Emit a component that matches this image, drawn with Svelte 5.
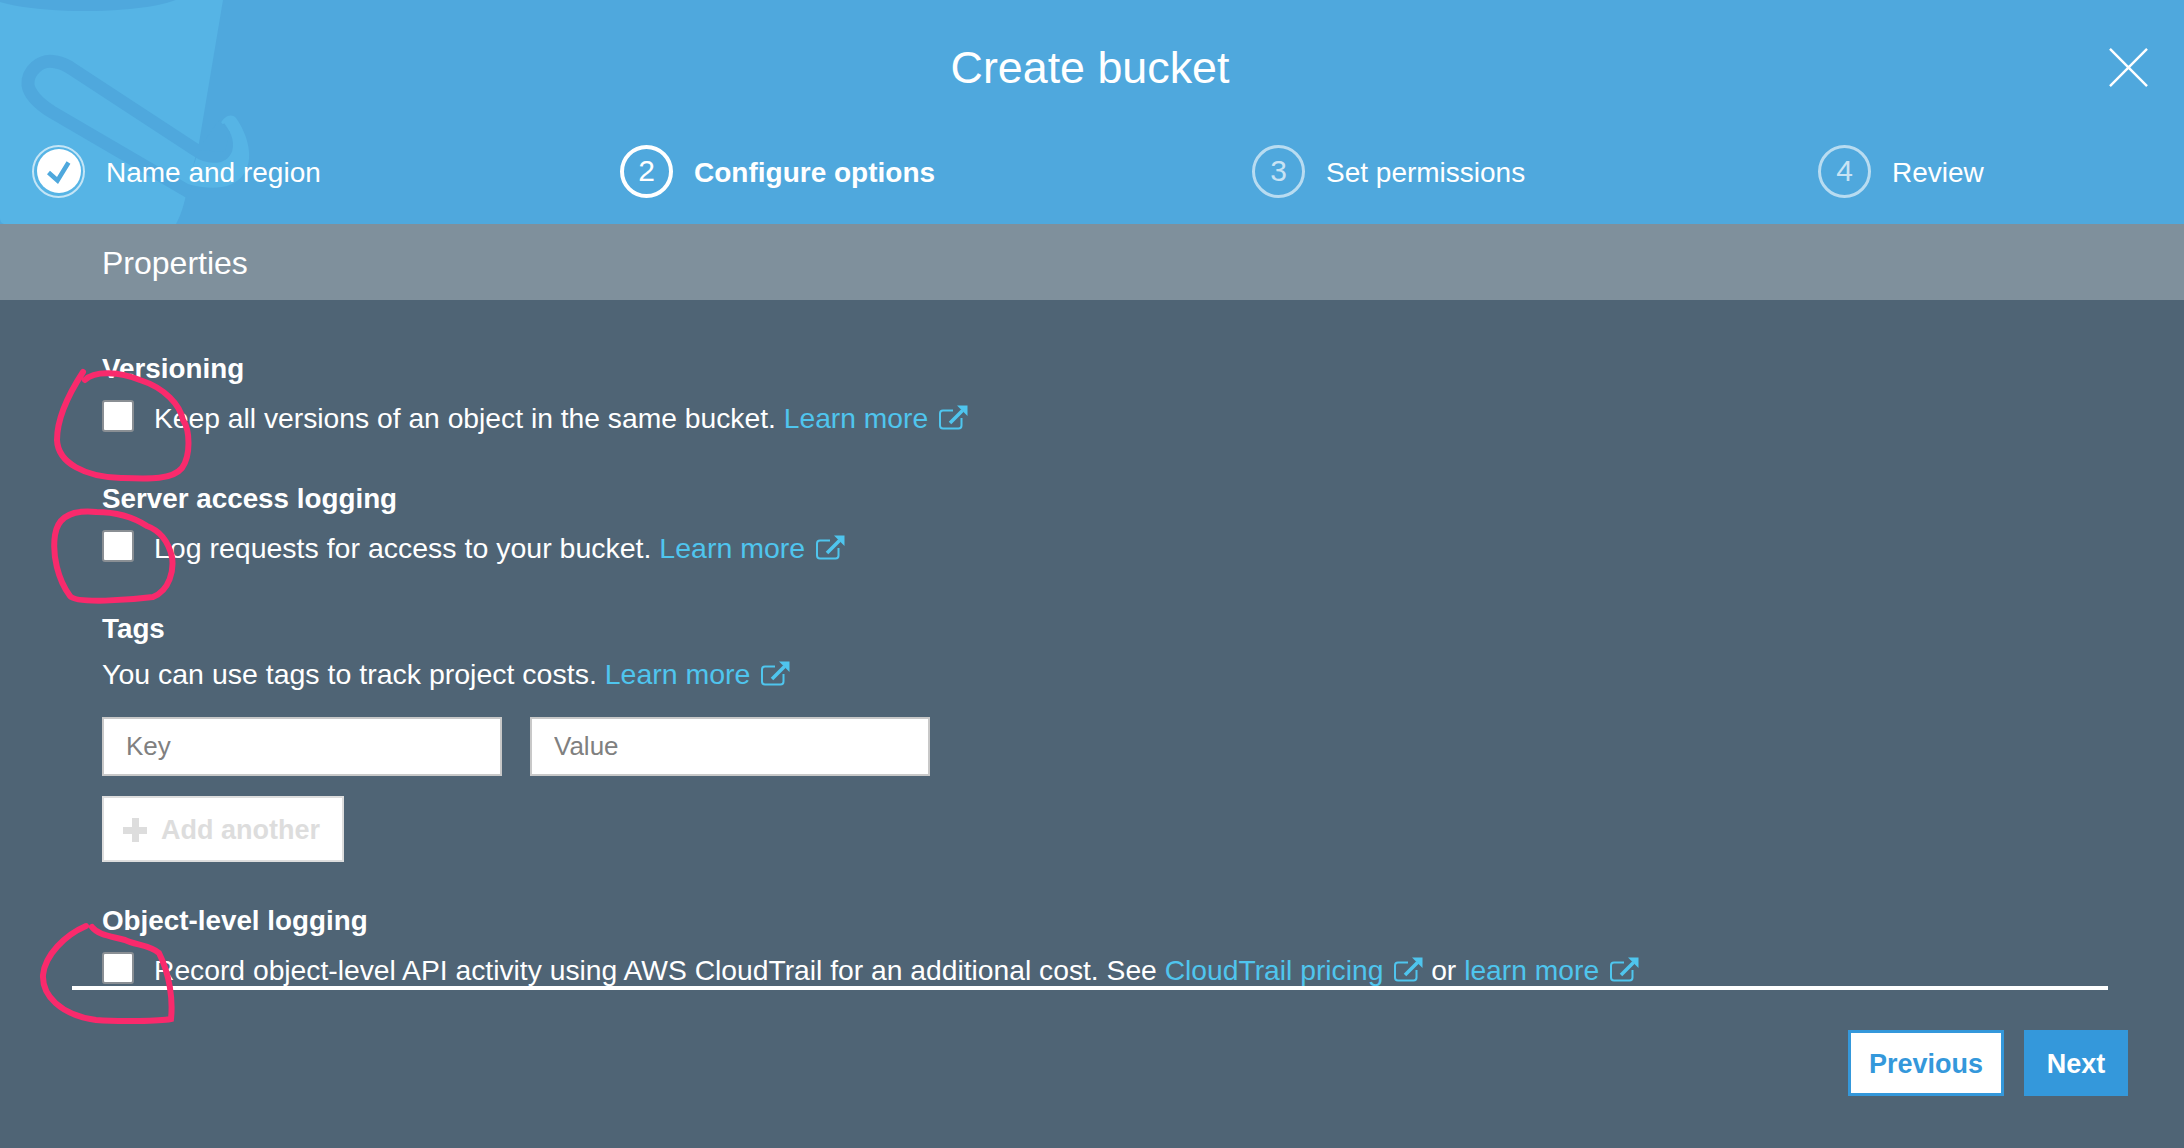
<script>
  const steps = [
    { n: 1, label: 'Name and region', done: true },
    { n: 2, label: 'Configure options', active: true },
    { n: 3, label: 'Set permissions' },
    { n: 4, label: 'Review' }
  ];
</script>

{#snippet ext()}
  <svg class="ext" viewBox="0 0 29 25" aria-hidden="true">
    <path d="M22.500 13v7.500a3 3 0 0 1-3 3H4a3 3 0 0 1-3-3V8.500a3 3 0 0 1 3-3h10" fill="none" stroke="currentColor" stroke-width="2" />
    <path d="M11 18 L23.500 5.500" fill="none" stroke="currentColor" stroke-width="3.500" />
    <path d="M18 .5H28.500V11Z" fill="currentColor" />
  </svg>
{/snippet}

<div class="page">
  <header class="head">
    <svg class="bucket" viewBox="0 0 260 224" aria-hidden="true">
      <path d="M0 0H223L199 143L187 190C184 205 181 215 176 224H6C2 224 0 222 0 218Z" fill="#56b4e5" />
      <path d="M219 127C222 118 230 112 236 118C248 135 255 160 243 175C232 190 210 190 187 184L199 150Z" fill="#56b4e5" />
      <ellipse cx="85" cy="-8" rx="100" ry="19" fill="#4fa8dd" />
      <path d="M189 192L52 112C36 102 29 92 28 85C27 72 40 58 56 62C62 63 68 66 72 69L196 150C207 158 222 159 226 149C228 141 224 134 219 127" fill="none" stroke="#4fa8dd" stroke-width="13" />
      <path d="M203 143L199 143L199 150L225 152L230 132L219 120Z" fill="#4fa8dd" />
    </svg>
    <h1>Create bucket</h1>
    <svg class="close" viewBox="0 0 40 40" aria-hidden="true">
      <path d="M1 1L39 39M39 1L1 39" stroke="#fff" stroke-width="2.500" />
    </svg>
    <ol class="steps">
      {#each steps as s}
        <li class="step" class:active={s.active}>
          {#if s.done}
            <span class="num done">
              <svg viewBox="0 0 44 44" aria-hidden="true"><path d="M11.500 23.500l9 8 11-18" fill="none" stroke="#4fa8dd" stroke-width="4.500" /></svg>
            </span>
          {:else}
            <span class="num">{s.n}</span>
          {/if}
          <span class="label">{s.label}</span>
        </li>
      {/each}
    </ol>
  </header>

  <div class="band">Properties</div>

  <main class="body">
    <div class="fields">
      <section class="field">
        <h2>Versioning</h2>
        <label class="row">
          <input type="checkbox" />
          <span>Keep all versions of an object in the same bucket. <a href="#v">Learn more {@render ext()}</a></span>
        </label>
      </section>
      <section class="field">
        <h2>Server access logging</h2>
        <label class="row wide">
          <input type="checkbox" />
          <span>Log requests for access to your bucket. <a href="#l">Learn more {@render ext()}</a></span>
        </label>
      </section>
      <section class="field tags">
        <h2>Tags</h2>
        <p class="wide">You can use tags to track project costs. <a href="#t">Learn more {@render ext()}</a></p>
        <div class="inputs">
          <input type="text" placeholder="Key" />
          <input type="text" placeholder="Value" />
        </div>
        <button class="add" disabled><span class="plus"></span>Add another</button>
      </section>
      <section class="field last">
        <h2>Object-level logging</h2>
        <label class="row">
          <input type="checkbox" />
          <span>Record object-level API activity using AWS CloudTrail for an additional cost. See <a href="#c">CloudTrail pricing {@render ext()}</a> or <a href="#m">learn more {@render ext()}</a></span>
        </label>
      </section>
    </div>
    <div class="rule"></div>
    <footer class="foot">
      <button class="btn prev">Previous</button>
      <button class="btn next">Next</button>
    </footer>
  </main>

  <!-- hand drawn marks on top of the screenshot -->
  <svg class="marks" viewBox="0 0 2184 1148" aria-hidden="true">
    <path d="M83 372C68 395 57 420 57 440C58 463 85 477 121 478C150 479 172 480 182 468C191 455 190 430 183 420C180 405 165 388 140 380C120 372 95 370 85 380" />
    <path d="M96 512C75 510 58 515 55 535C52 555 58 580 70 596C76 604 130 600 153 597C170 590 174 570 172 557C168 540 158 530 147 526C130 515 112 512 96 512" />
    <path d="M86 926C65 935 45 955 43 975C42 995 60 1015 96 1020C120 1022 160 1021 171 1019C173 1000 170 975 159 953C150 945 135 945 125 940C110 936 98 935 92 927" />
  </svg>
</div>

<style>
  :global(body) { margin: 0; background: #4f6475; }
  .page {
    position: relative;
    width: 2184px; height: 1148px; overflow: hidden;
    background: #4f6475;
    color: #fff;
    font-family: "Liberation Sans", Arial, sans-serif;
    font-size: 28.25px;
  }
  .head { position: relative; height: 224px; background: #4fa8dd; }
  .bucket { position: absolute; left: 0; top: 0; width: 260px; height: 224px; }
  .close { position: absolute; left: 2109px; top: 48px; width: 39px; height: 39px; }
  h1 {
    position: relative; margin: 0; padding-top: 42px; padding-right: 4px;
    text-align: center; font-size: 44.800px; line-height: 50px; font-weight: 400;
  }
  .steps {
    position: relative; list-style: none; margin: 0; padding: 52px 0 0 32px;
    display: grid; grid-template-columns: 588px 632px 566px auto;
    font-size: 28px;
  }
  .step { display: flex; align-items: center; gap: 21px; height: 54px; }
  .step.active { font-weight: 700; }
  .label { padding-top: 4px; }
  .num {
    box-sizing: border-box; width: 53px; height: 53px; border-radius: 50%;
    border: 3px solid rgba(255, 255, 255, 0.6);
    color: rgba(255, 255, 255, 0.7);
    display: flex; align-items: center; justify-content: center;
    font-size: 30px; font-weight: 400;
  }
  .active .num { border-color: #fff; color: #fff; border-width: 4px; }
  .num.done {
    border-width: 2px; border-color: rgba(255, 255, 255, 0.65);
    padding: 2px;
  }
  .num.done svg { width: 44px; height: 44px; background: #fff; border-radius: 50%; }
  .band {
    box-sizing: border-box; height: 76px; padding-left: 102px;
    background: #7f909c; font-size: 32px; line-height: 78px;
  }
  .fields { padding: 48px 0 0 102px; }
  h2 { margin: 0 0 -2px; font-size: 27.800px; line-height: 42px; font-weight: 700; }
  .field { margin-bottom: 42px; }
  .field.last { margin-bottom: 0; margin-top: 38px; }
  .tags { margin-bottom: 0; }
  .row { display: flex; gap: 20px; margin-top: 12px; line-height: 36px; height: 36px; white-space: nowrap; }
  .wide { font-size: 28.500px; }
  .row input {
    appearance: none; margin: 0; box-sizing: border-box; flex: none;
    width: 32px; height: 32px; background: #fff;
    border: 2px solid #8a8f94; border-radius: 3px;
  }
  p { margin: 8px 0 -1px; line-height: 37px; }
  a { color: #4fc5ee; text-decoration: none; }
  .ext { width: 29px; height: 25px; margin-left: 3px; vertical-align: -2px; }
  .inputs { display: flex; gap: 28px; margin-top: 25px; }
  .inputs input {
    box-sizing: border-box; width: 400px; height: 59px; padding: 0 22px;
    background: #fff; border: 2px solid #c8c8c8; border-radius: 0;
    font: 26px "Liberation Sans", Arial, sans-serif; outline: none;
  }
  .inputs input::placeholder { color: #808080; opacity: 1; }
  .add {
    display: flex; align-items: center; gap: 14px;
    box-sizing: border-box; width: 242px; height: 66px; margin-top: 20px; padding: 2px 0 0 19px;
    background: #fff; border: 2px solid #ddd;
    color: #ddd; font: 700 27px "Liberation Sans", Arial, sans-serif;
  }
  .plus {
    width: 24px; height: 24px; flex: none;
    background:
      linear-gradient(#ddd, #ddd) center / 24px 7px no-repeat,
      linear-gradient(#ddd, #ddd) center / 7px 24px no-repeat;
  }
  .rule { height: 4px; margin: -2px 76px 0 72px; background: #fff; position: relative; }
  .foot { display: flex; justify-content: flex-end; gap: 20px; padding: 40px 56px 0 0; }
  .btn {
    box-sizing: border-box; height: 66px; border: 3px solid #3498db;
    font: 700 27px "Liberation Sans", Arial, sans-serif; padding: 2px 0 0;
  }
  .prev { width: 156px; background: #fff; color: #3498db; }
  .next { width: 104px; background: #3498db; color: #fff; }
  .marks {
    position: absolute; left: 0; top: 0; width: 2184px; height: 1148px;
    pointer-events: none; fill: none; stroke: #f92a6c; stroke-width: 6; stroke-linecap: round;
  }
</style>
